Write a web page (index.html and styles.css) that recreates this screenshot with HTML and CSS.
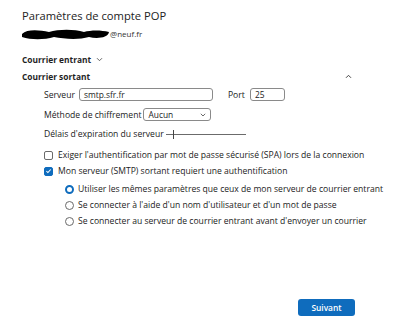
FILE: index.html
```html
<!DOCTYPE html>
<html lang="fr">
<head>
<meta charset="utf-8">
<link rel="stylesheet" href="styles.css">
</head>
<body>
<div class="page">
  <h1 class="title">Paramètres de compte POP</h1>
  <div class="email">
    <svg class="scribble" width="92" height="12" viewBox="0 0 92 12"><path d="M3 6 C8 1,20 2,30 4 C40 1,55 1,65 4 C72 2,82 2,90 4 C89 10,78 11,70 9 C60 12,45 11,35 9 C25 12,12 12,3 9 Z" fill="#000"/></svg>
    <span>@neuf.fr</span>
  </div>
  <div class="section-head">
    <span>Courrier entrant</span>
    <svg class="chev" width="7" height="5" viewBox="0 0 7 5"><path d="M1 1.2 L3.5 3.7 L6 1.2" fill="none" stroke="#555" stroke-width="0.9"/></svg>
  </div>
  <div class="section-head open">
    <span>Courrier sortant</span>
    <svg class="caret" width="7" height="5" viewBox="0 0 7 5"><path d="M1 3.8 L3.5 1.3 L6 3.8" fill="none" stroke="#444" stroke-width="1"/></svg>
  </div>
  <div class="body">
    <div class="row r-server">
      <span class="lbl">Serveur</span>
      <div class="input wide">smtp.sfr.fr</div>
      <span class="lbl port">Port</span>
      <div class="input small">25</div>
    </div>
    <div class="row r-method">
      <span class="lbl">Méthode de chiffrement</span>
      <div class="input select"><span>Aucun</span>
        <svg width="6" height="4" viewBox="0 0 6 4"><path d="M0.8 0.8 L3 3 L5.2 0.8" fill="none" stroke="#444" stroke-width="0.8"/></svg>
      </div>
    </div>
    <div class="row r-slider">
      <span class="lbl">Délais d'expiration du serveur</span>
      <div class="slider"><span class="thumb"></span></div>
    </div>
    <label class="check r-spa"><span class="box"></span>Exiger l'authentification par mot de passe sécurisé (SPA) lors de la connexion</label>
    <label class="check r-smtp"><span class="box checked"><svg width="8" height="8" viewBox="0 0 8 8"><path d="M1.6 4.2 L3.3 5.8 L6.5 2.3" fill="none" stroke="#fff" stroke-width="1.2"/></svg></span>Mon serveur (SMTP) sortant requiert une authentification</label>
    <div class="radios">
      <label class="radio"><span class="dot on"></span>Utiliser les mêmes paramètres que ceux de mon serveur de courrier entrant</label>
      <label class="radio"><span class="dot"></span>Se connecter à l'aide d'un nom d'utilisateur et d'un mot de passe</label>
      <label class="radio"><span class="dot"></span>Se connecter au serveur de courrier entrant avant d'envoyer un courrier</label>
    </div>
  </div>
  <div class="footer">
    <button class="btn">Suivant</button>
  </div>
</div>
</body>
</html>
```
FILE: styles.css
```css
html, body { margin: 0; padding: 0; background: #fff; }
body { width: 400px; height: 327px; overflow: hidden; font-family: "Open Sans", "Noto Sans", sans-serif; color: #1b1b1b; }
.page { padding: 8px 0 0 22px; box-sizing: border-box; width: 400px; height: 327px; display: flex; flex-direction: column; }
.title { margin: 0; font-size: 11.2px; font-weight: 400; line-height: 16px; color: #222; }
.email { display: flex; align-items: center; margin-top: 3px; margin-left: -3px; height: 13px; font-size: 8px; color: #333; }
.scribble { display: block; }
.email span { margin-left: -1px; }
.section-head { display: flex; align-items: center; margin-top: 13px; height: 12px; font-size: 8.4px; font-weight: 700; color: #1f1f1f; }
.section-head .chev { margin-left: 5px; }
.section-head.open { margin-top: 5px; width: 330px; justify-content: space-between; }
.body { padding-left: 22px; font-size: 8.6px; color: #222; }
.row { display: flex; align-items: center; }
.r-server { margin-top: 6px; height: 13px; }
.lbl { white-space: nowrap; }
.input { box-sizing: border-box; height: 13px; border: 1px solid #8a8a8a; border-radius: 3px; padding: 0 4px; line-height: 11px; font-size: 8.4px; color: #1b1b1b; }
.input.wide { width: 134px; margin-left: 4px; }
.port { margin-left: 15px; }
.input.small { width: 35px; margin-left: 5px; }
.r-method { margin-top: 7px; height: 13px; }
.input.select { width: 68px; margin-left: 2px; display: flex; align-items: center; justify-content: space-between; }
.r-slider { margin-top: 7px; height: 12px; }
.slider { position: relative; width: 80px; height: 1px; background: #6b6b6b; margin-left: 2px; }
.thumb { position: absolute; left: 7px; top: -4px; width: 1px; height: 9px; background: #444; }
.check { display: flex; align-items: center; white-space: nowrap; height: 12px; }
.r-spa { margin-top: 9px; }
.r-smtp { margin-top: 4px; }
.box { box-sizing: border-box; width: 9px; height: 9px; border: 1px solid #6a6a6a; border-radius: 2px; margin-right: 5px; display: flex; align-items: center; justify-content: center; }
.box.checked { background: #0f6cbd; border-color: #0f6cbd; }
.radios { padding-left: 21px; margin-top: 6px; display: flex; flex-direction: column; gap: 4px; }
.radio { display: flex; align-items: center; white-space: nowrap; height: 12px; }
.dot { box-sizing: border-box; width: 9px; height: 9px; border: 1px solid #6a6a6a; border-radius: 50%; margin-right: 4px; }
.dot.on { border: 2.6px solid #0f6cbd; }
.footer { margin-top: auto; padding: 0 45px 11px 0; display: flex; justify-content: flex-end; }
.btn { width: 57px; height: 17px; border: none; border-radius: 3px; background: #0f6cbd; color: #fff; font-family: inherit; font-size: 8.4px; font-weight: 600; padding: 0; }
```
